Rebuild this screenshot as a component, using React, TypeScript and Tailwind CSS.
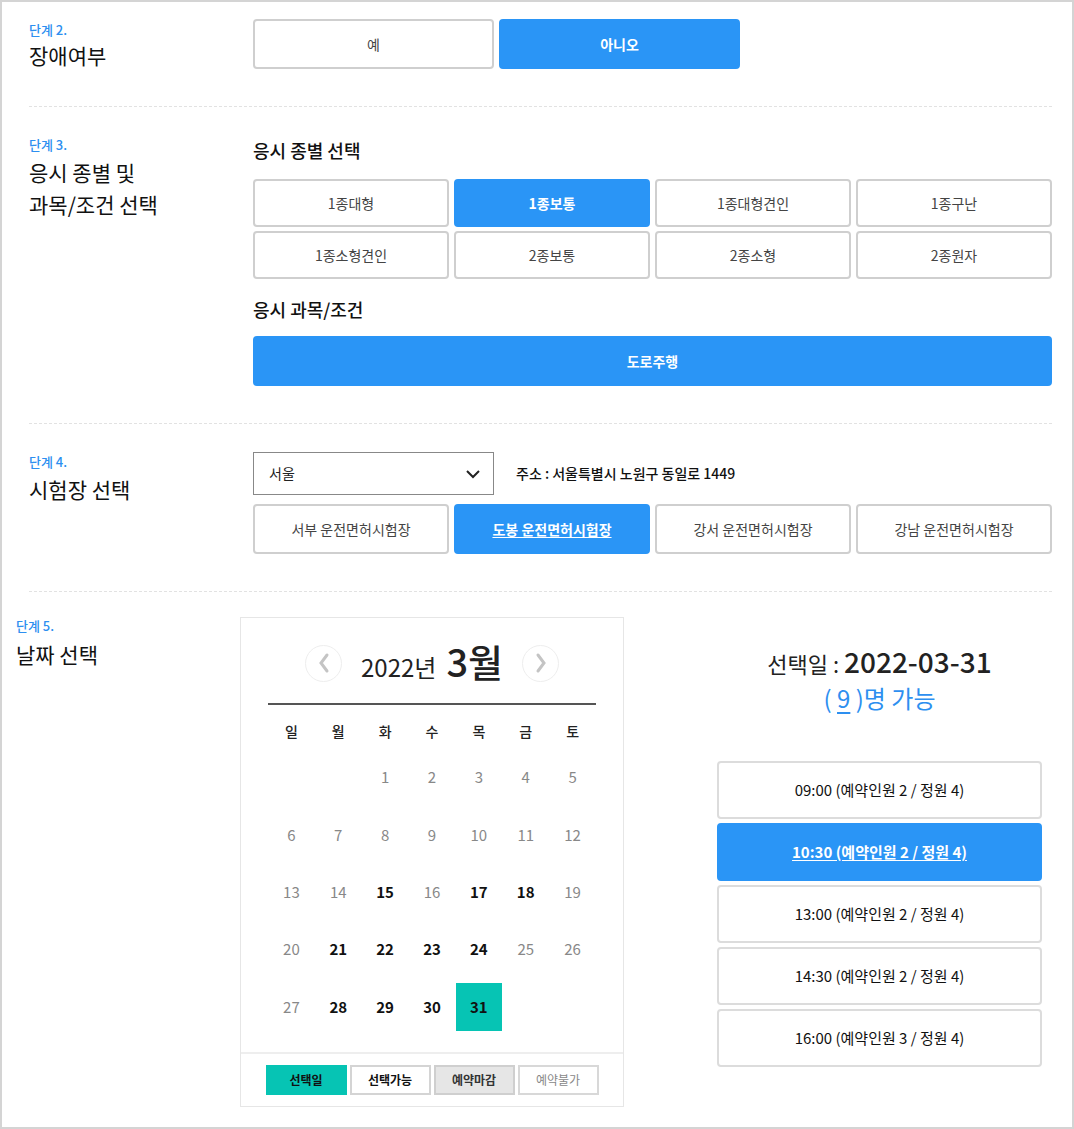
import React from 'react';

const kinds = ['1종대형', '1종보통', '1종대형견인', '1종구난', '1종소형견인', '2종보통', '2종소형', '2종원자'];
const centers = ['서부 운전면허시험장', '도봉 운전면허시험장', '강서 운전면허시험장', '강남 운전면허시험장'];
const weekdays = ['일', '월', '화', '수', '목', '금', '토'];
const available = [15, 17, 18, 21, 22, 23, 24, 28, 29, 30];
const slots = [
  '09:00 (예약인원 2 / 정원 4)',
  '10:30 (예약인원 2 / 정원 4)',
  '13:00 (예약인원 2 / 정원 4)',
  '14:30 (예약인원 2 / 정원 4)',
  '16:00 (예약인원 3 / 정원 4)',
];

function StepLabel({ step, lines, first }: { step: string; lines: string[]; first?: boolean }) {
  return (
    <div className={`w-[224px] shrink-0 ${first ? 'pt-[3px]' : 'pt-[2px]'}`}>
      <div className="text-[13px] leading-[16px] font-medium text-[#2d8ff0]">{step}</div>
      <div className={`${first ? 'mt-[1px]' : 'mt-[3px]'} text-[21px] leading-[32px] text-[#111]`}>
        {lines.map((l) => (
          <div key={l}>{l}</div>
        ))}
      </div>
    </div>
  );
}

function OptionButton({ label, active, underline }: { label: string; active?: boolean; underline?: boolean }) {
  return (
    <button
      className={`flex items-center justify-center rounded-[4px] border-2 text-[14px] ${
        active
          ? 'border-[#2a95f6] bg-[#2a95f6] font-bold text-white'
          : 'border-[#cfcfcf] bg-white text-[#444]'
      } ${underline ? 'underline underline-offset-2' : ''}`}
    >
      {label}
    </button>
  );
}

function Calendar() {
  const cells: (number | null)[] = [null, null];
  for (let d = 1; d <= 31; d++) cells.push(d);
  while (cells.length < 35) cells.push(null);
  return (
    <div className="w-[384px] shrink-0 self-start border border-[#e6e6e6] bg-white">
      <div className="flex h-[85px] items-center justify-center gap-[19px] pt-[5px]">
        <div className="flex h-[37px] w-[37px] items-center justify-center rounded-full border border-[#eee]">
          <svg width="14" height="22" viewBox="0 0 14 22">
            <path d="M10 3 L4 11 L10 19" fill="none" stroke="#c4c4c4" strokeWidth="3" strokeLinecap="round" />
          </svg>
        </div>
        <div className="flex items-baseline gap-[10px] text-[#222]">
          <span className="text-[24px]">2022년</span>
          <span className="text-[38px] font-medium leading-none">3월</span>
        </div>
        <div className="flex h-[37px] w-[37px] items-center justify-center rounded-full border border-[#eee]">
          <svg width="14" height="22" viewBox="0 0 14 22">
            <path d="M4 3 L10 11 L4 19" fill="none" stroke="#c4c4c4" strokeWidth="3" strokeLinecap="round" />
          </svg>
        </div>
      </div>
      <div className="mx-[27px] border-t-2 border-[#555]" />
      <div className="mx-[27px] grid grid-cols-7">
        {weekdays.map((w) => (
          <div key={w} className="h-[44px] pt-[16px] text-center text-[14px] font-medium leading-[20px] text-[#222]">
            {w}
          </div>
        ))}
      </div>
      <div className="mx-[27px] grid grid-cols-7">
        {cells.map((d, i) => {
          const avail = d !== null && available.includes(d);
          const sel = d === 31;
          return (
            <div key={i} className="flex h-[57.3px] items-center justify-center">
              {d !== null && (
                <div
                  className={`flex h-[48px] w-[46px] items-center justify-center text-[15px] ${
                    sel
                      ? 'bg-[#06c4b4] font-bold text-[#111]'
                      : avail
                      ? 'font-bold text-[#111]'
                      : 'text-[#888]'
                  }`}
                >
                  {d}
                </div>
              )}
            </div>
          );
        })}
      </div>
      <div className="mt-[17px] flex justify-center gap-[3px] border-t-2 border-[#eee] pb-[11px] pt-[11px]">
        <div className="flex h-[30px] w-[81px] items-center justify-center border border-[#06c4b4] bg-[#06c4b4] text-[12px] font-bold text-[#111]">
          선택일
        </div>
        <div className="flex h-[30px] w-[81px] items-center justify-center border-2 border-[#d4d4d4] bg-white text-[12px] font-bold text-[#111]">
          선택가능
        </div>
        <div className="flex h-[30px] w-[81px] items-center justify-center border-2 border-[#cfcfcf] bg-[#e6e6e6] text-[12px] font-bold text-[#333]">
          예약마감
        </div>
        <div className="flex h-[30px] w-[81px] items-center justify-center border-2 border-[#d8d8d8] bg-white text-[12px] text-[#888]">
          예약불가
        </div>
      </div>
    </div>
  );
}

export default function App() {
  return (
    <div className="h-[1129px] w-[1074px] border-2 border-[#d4d4d4] bg-white font-['Noto_Sans_CJK_KR','Noto_Sans',sans-serif]">
      {/* 단계 2 */}
      <div className="ml-[27px] mr-[20px] flex h-[105px] border-b border-dashed border-[#e2e2e2] pt-[17px]">
        <StepLabel step="단계 2." lines={['장애여부']} first />
        <div className="flex gap-[5px]">
          <div className="grid h-[50px] w-[241px]">
            <OptionButton label="예" />
          </div>
          <div className="grid h-[50px] w-[241px]">
            <OptionButton label="아니오" active />
          </div>
        </div>
      </div>

      {/* 단계 3 */}
      <div className="ml-[27px] mr-[20px] flex h-[317px] border-b border-dashed border-[#e2e2e2] pt-[28px]">
        <StepLabel step="단계 3." lines={['응시 종별 및', '과목/조건 선택']} />
        <div className="flex-1">
          <div className="text-[18px] font-medium leading-[30px] text-[#111]">응시 종별 선택</div>
          <div className="mt-[14px] grid grid-cols-4 gap-[4px_5px]">
            {kinds.map((k) => (
              <div key={k} className="grid h-[48px]">
                <OptionButton label={k} active={k === '1종보통'} />
              </div>
            ))}
          </div>
          <div className="mt-[15px] text-[18px] font-medium leading-[30px] text-[#111]">응시 과목/조건</div>
          <div className="mt-[12px] grid h-[50px]">
            <OptionButton label="도로주행" active />
          </div>
        </div>
      </div>

      {/* 단계 4 */}
      <div className="ml-[27px] mr-[20px] flex h-[168px] border-b border-dashed border-[#e2e2e2] pt-[28px]">
        <StepLabel step="단계 4." lines={['시험장 선택']} />
        <div className="flex-1">
          <div className="flex items-center gap-[22px]">
            <div className="flex h-[43px] w-[241px] items-center justify-between border border-[#888] pl-[15px] pr-[12px] text-[14px] text-[#222]">
              <span>서울</span>
              <svg width="16" height="10" viewBox="0 0 16 10">
                <path d="M2 2 L8 8 L14 2" fill="none" stroke="#222" strokeWidth="2" />
              </svg>
            </div>
            <div className="text-[14px] font-medium text-[#111]">주소 : 서울특별시 노원구 동일로 1449</div>
          </div>
          <div className="mt-[9px] grid grid-cols-4 gap-[5px]">
            {centers.map((c, i) => (
              <div key={c} className="grid h-[50px]">
                <OptionButton label={c} active={i === 1} underline={i === 1} />
              </div>
            ))}
          </div>
        </div>
      </div>

      {/* 단계 5 */}
      <div className="flex pt-[25px]">
        <div className="w-[238px] shrink-0 pl-[14px] pt-[1px]">
          <div className="text-[13px] leading-[16px] font-medium text-[#2d8ff0]">단계 5.</div>
          <div className="mt-[4px] text-[21px] leading-[32px] text-[#111]">날짜 선택</div>
        </div>
        <Calendar />
        <div className="flex-1 pl-[93px]">
          <div className="flex w-[325px] flex-col items-center">
            <div className="mt-[23px] flex items-baseline text-[#222]">
              <span className="text-[22px]">선택일 :&nbsp;</span>
              <span className="text-[28px] font-medium">2022-03-31</span>
            </div>
            <div className="mt-[-2px] text-[24px] text-[#2d8ff0]">
              ( <span className="underline underline-offset-4">9</span> )명 가능
            </div>
          </div>
          <div className="mt-[45px] flex flex-col gap-[4px]">
            {slots.map((s, i) => (
              <div
                key={s}
                className={`flex h-[58px] w-[325px] items-center justify-center rounded-[4px] border-2 text-[15px] ${
                  i === 1
                    ? 'border-[#2a95f6] bg-[#2a95f6] font-bold text-white underline underline-offset-2'
                    : 'border-[#dcdcdc] bg-white text-[#111]'
                }`}
              >
                {s}
              </div>
            ))}
          </div>
        </div>
      </div>
    </div>
  );
}
